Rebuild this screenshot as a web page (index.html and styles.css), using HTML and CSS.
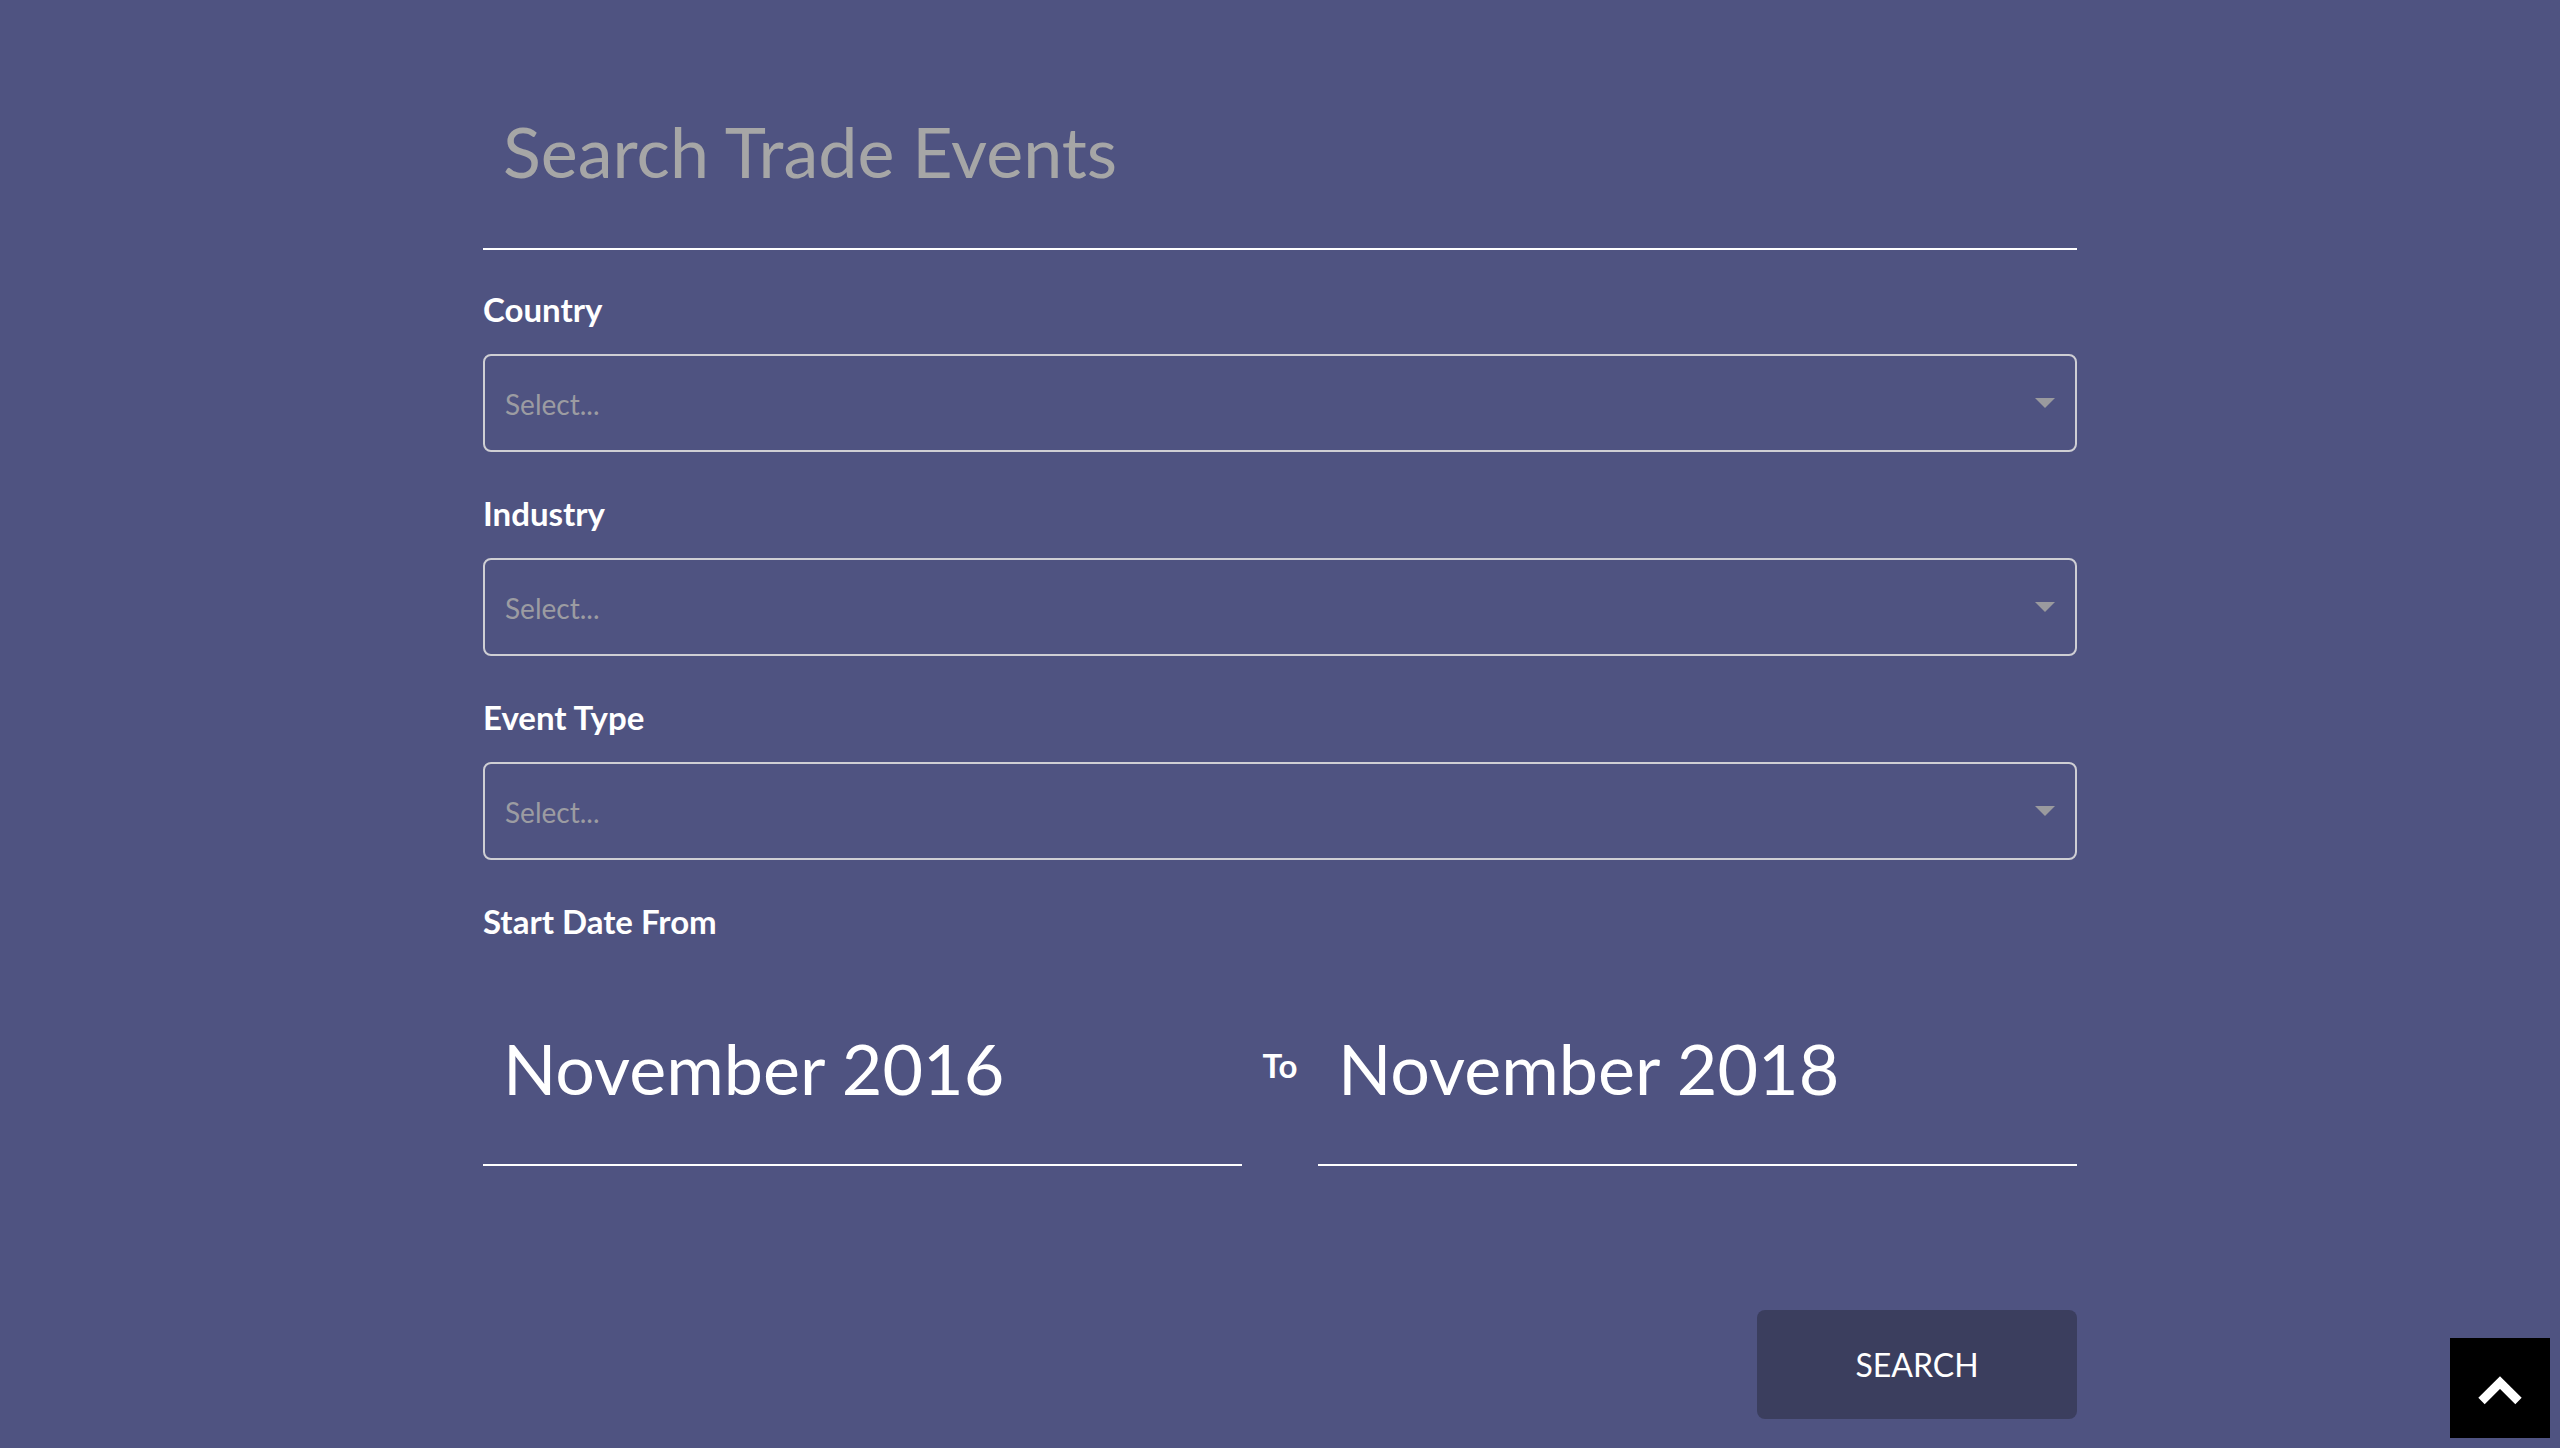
FILE: index.html
```html
<!DOCTYPE html>
<html lang="en">
<head>
<meta charset="utf-8">
<title>Search Trade Events</title>
<link rel="stylesheet" href="styles.css">
</head>
<body>
<main class="page">
  <form class="search-form">
    <h1 class="title">Search Trade Events</h1>

    <div class="field">
      <label class="label">Country</label>
      <div class="select"><span class="placeholder">Select...</span><span class="arrow"></span></div>
    </div>

    <div class="field">
      <label class="label">Industry</label>
      <div class="select"><span class="placeholder">Select...</span><span class="arrow"></span></div>
    </div>

    <div class="field">
      <label class="label">Event Type</label>
      <div class="select"><span class="placeholder">Select...</span><span class="arrow"></span></div>
    </div>

    <div class="field">
      <label class="label">Start Date From</label>
      <div class="date-range">
        <div class="date-input">November 2016</div>
        <span class="to">To</span>
        <div class="date-input">November 2018</div>
      </div>
    </div>

    <div class="actions">
      <button type="button" class="search-btn">SEARCH</button>
    </div>
  </form>
</main>
<a class="back-to-top" href="#">
  <svg width="44" height="30" viewBox="0 0 44 30"><polyline points="3.5,26 22,7.5 40.5,26" fill="none" stroke="#fff" stroke-width="9" stroke-linejoin="miter"/></svg>
</a>
</body>
</html>
```
FILE: styles.css
```css
html, body {
  margin: 0;
  padding: 0;
}
body {
  background: #4f5381;
  font-family: Lato, "Open Sans", "Liberation Sans", sans-serif;
  min-height: 1448px;
}
.page {
  width: 1594px;
  margin: 0 auto;
}
.search-form {
  display: flex;
  flex-direction: column;
}
.title {
  margin: 0;
  padding: 109px 0 55px 20px;
  font-size: 70px;
  line-height: 1.2;
  font-weight: 400;
  color: #a6a6a6;
  border-bottom: 2px solid #ffffff;
}
.field {
  margin-top: 41.5px;
  display: flex;
  flex-direction: column;
}
.title + .field {
  margin-top: 39.5px;
}
.label {
  display: block;
  font-size: 33px;
  line-height: 1.2;
  font-weight: 700;
  color: #ffffff;
}
.select {
  margin-top: 25px;
  box-sizing: border-box;
  height: 98px;
  border: 2px solid #cfcfd4;
  border-radius: 8px;
  padding: 0 20px 0 20px;
  display: flex;
  align-items: center;
  justify-content: space-between;
}
.placeholder {
  font-size: 28px;
  line-height: 1.2;
  color: #9c9ca2;
  padding-top: 3px;
}
.arrow {
  width: 0;
  height: 0;
  border-left: 10px solid transparent;
  border-right: 10px solid transparent;
  border-top: 10px solid #9a9a9e;
}
.date-range {
  margin-top: 23.5px;
  display: flex;
  align-items: center;
}
.date-input {
  flex: 1;
  padding: 61px 20px 54px 20px;
  font-size: 70px;
  line-height: 1.2;
  color: #ffffff;
  border-bottom: 2px solid #ffffff;
}
.to {
  width: 76px;
  text-align: center;
  font-size: 33px;
  line-height: 1.2;
  font-weight: 700;
  color: #ffffff;
}
.actions {
  margin-top: 144px;
  display: flex;
  justify-content: flex-end;
}
.search-btn {
  width: 320px;
  height: 109px;
  background: #3b3e5e;
  border: none;
  border-radius: 8px;
  color: #ffffff;
  font-family: Lato, "Open Sans", "Liberation Sans", sans-serif;
  font-size: 32px;
  font-weight: 400;
  padding: 0;
}
.back-to-top {
  position: fixed;
  right: 10px;
  bottom: 10px;
  width: 100px;
  height: 100px;
  background: #000000;
  display: flex;
  align-items: center;
  justify-content: center;
  padding-top: 4px;
  box-sizing: border-box;
}
```
